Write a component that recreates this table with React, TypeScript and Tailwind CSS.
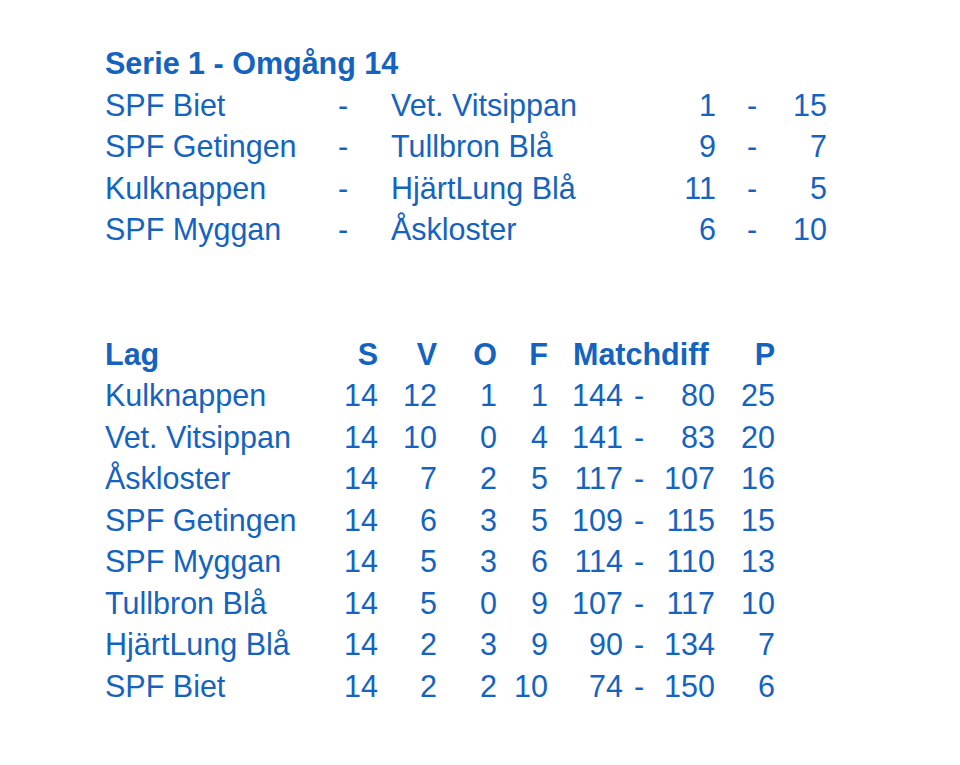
import React from "react";

const matches = [
  { home: "SPF Biet", away: "Vet. Vitsippan", a: 1, b: 15 },
  { home: "SPF Getingen", away: "Tullbron Blå", a: 9, b: 7 },
  { home: "Kulknappen", away: "HjärtLung Blå", a: 11, b: 5 },
  { home: "SPF Myggan", away: "Åskloster", a: 6, b: 10 },
];

const table = [
  { lag: "Kulknappen", s: 14, v: 12, o: 1, f: 1, plus: 144, minus: 80, p: 25 },
  { lag: "Vet. Vitsippan", s: 14, v: 10, o: 0, f: 4, plus: 141, minus: 83, p: 20 },
  { lag: "Åskloster", s: 14, v: 7, o: 2, f: 5, plus: 117, minus: 107, p: 16 },
  { lag: "SPF Getingen", s: 14, v: 6, o: 3, f: 5, plus: 109, minus: 115, p: 15 },
  { lag: "SPF Myggan", s: 14, v: 5, o: 3, f: 6, plus: 114, minus: 110, p: 13 },
  { lag: "Tullbron Blå", s: 14, v: 5, o: 0, f: 9, plus: 107, minus: 117, p: 10 },
  { lag: "HjärtLung Blå", s: 14, v: 2, o: 3, f: 9, plus: 90, minus: 134, p: 7 },
  { lag: "SPF Biet", s: 14, v: 2, o: 2, f: 10, plus: 74, minus: 150, p: 6 },
];

export default function App() {
  return (
    <div
      className="min-h-[765px] w-[960px] bg-white pl-[105px] pt-[43px] text-[30.5px] leading-[41.5px] text-[#1563c0]"
      style={{ fontFamily: '"Liberation Sans", Arial, sans-serif' }}
    >
      {/* omgång */}
      <div className="font-bold">Serie 1 - Omgång 14</div>
      {matches.map((m) => (
        <div key={m.home} className="flex whitespace-nowrap">
          <div className="w-[233px]">{m.home}</div>
          <div className="w-[53px]">-</div>
          <div className="w-[262px]">{m.away}</div>
          <div className="w-[63px] text-right">{m.a}</div>
          <div className="w-[31px]"></div>
          <div className="w-[10px]">-</div>
          <div className="w-[70px] text-right">{m.b}</div>
        </div>
      ))}

      <div className="h-[83px]"></div>

      {/* tabell */}
      <div className="flex whitespace-nowrap font-bold">
        <div className="w-[213px]">Lag</div>
        <div className="w-[60px] text-right">S</div>
        <div className="w-[59px] text-right">V</div>
        <div className="w-[60px] text-right">O</div>
        <div className="w-[51px] text-right">F</div>
        <div className="w-[167px] pl-[25px]">Matchdiff</div>
        <div className="w-[60px] text-right">P</div>
      </div>
      {table.map((r) => (
        <div key={r.lag} className="flex whitespace-nowrap">
          <div className="w-[213px]">{r.lag}</div>
          <div className="w-[60px] text-right">{r.s}</div>
          <div className="w-[59px] text-right">{r.v}</div>
          <div className="w-[60px] text-right">{r.o}</div>
          <div className="w-[51px] text-right">{r.f}</div>
          <div className="w-[75px] text-right">{r.plus}</div>
          <div className="w-[26px] pl-[11px]">-</div>
          <div className="w-[66px] text-right">{r.minus}</div>
          <div className="w-[60px] text-right">{r.p}</div>
        </div>
      ))}
    </div>
  );
}
